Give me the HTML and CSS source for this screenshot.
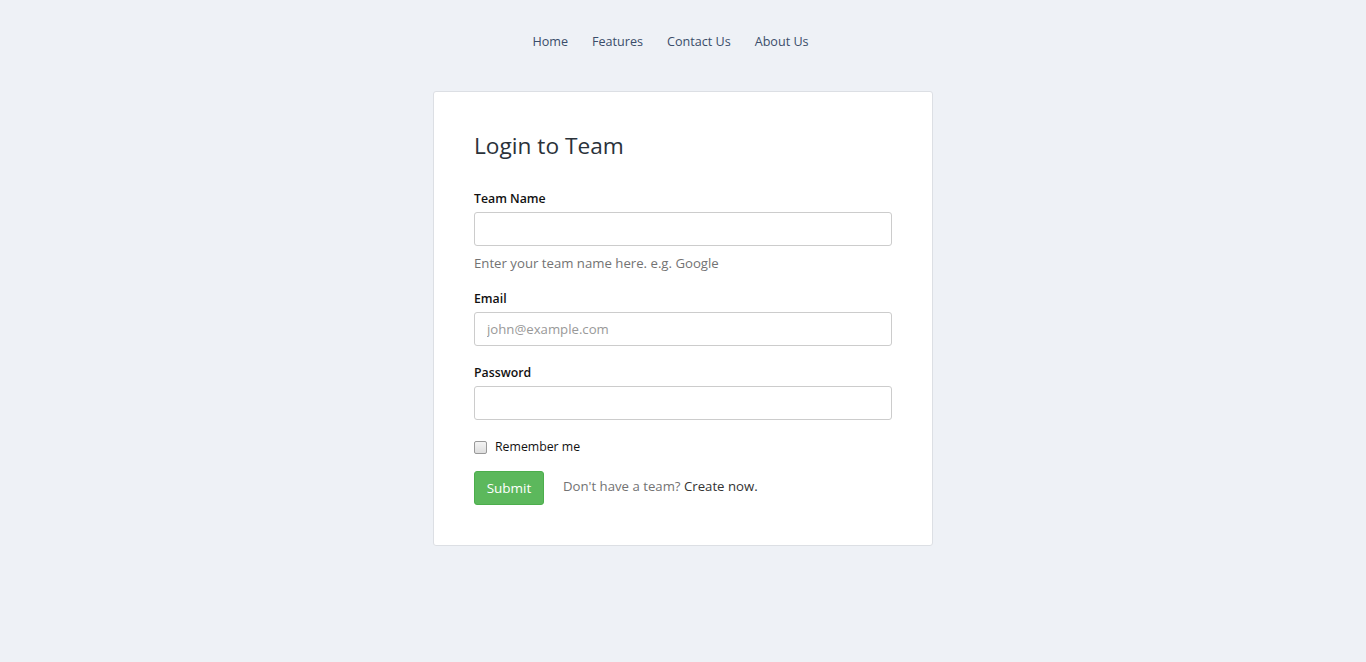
FILE: index.html
```html
<!DOCTYPE html>
<html>
<head>
<meta charset="utf-8">
<link rel="stylesheet" href="styles.css">
</head>
<body>
<nav class="nav">
  <a href="#">Home</a>
  <a href="#">Features</a>
  <a href="#">Contact Us</a>
  <a href="#">About Us</a>
</nav>
<main class="card">
  <h1 class="title">Login to Team</h1>
  <div class="group">
    <label class="label">Team Name</label>
    <input class="input" type="text">
    <p class="help">Enter your team name here. e.g. Google</p>
  </div>
  <div class="group">
    <label class="label">Email</label>
    <input class="input" type="text" placeholder="john@example.com">
  </div>
  <div class="group">
    <label class="label">Password</label>
    <input class="input" type="password">
  </div>
  <label class="check"><span class="box"></span>Remember me</label>
  <div class="actions">
    <button class="btn">Submit</button>
    <span class="alt">Don't have a team? <a href="#">Create now.</a></span>
  </div>
</main>
</body>
</html>
```
FILE: styles.css
```css
html, body { margin: 0; padding: 0; }
body {
  background: #eef1f6;
  font-family: "Open Sans", "Noto Sans", sans-serif;
  font-size: 13px;
  color: #333;
}
.nav {
  display: flex;
  justify-content: center;
  gap: 24px;
  padding: 33px 25px 0 0;
  height: 59px;
  box-sizing: border-box;
}
.nav a {
  color: #3a4d6a;
  text-decoration: none;
  font-size: 12.6px;
  line-height: 18px;
}
.card {
  width: 500px;
  box-sizing: border-box;
  margin: 32px auto 0;
  background: #fff;
  border: 1px solid #dcdfe4;
  border-radius: 3px;
  padding: 38px 40px 40px;
}
.title {
  margin: 0 0 28px;
  font-size: 22.7px;
  font-weight: 400;
  color: #2a323a;
  line-height: 32px;
}
.group { margin-bottom: 18px; }
.label {
  display: block;
  color: #111;
  font-size: 12.3px;
  font-weight: 600;
  line-height: 18px;
  margin-bottom: 4px;
}
.input {
  display: block;
  width: 100%;
  box-sizing: border-box;
  height: 34px;
  border: 1px solid #ccc;
  border-radius: 3px;
  padding: 6px 12px;
  font-family: inherit;
  font-size: 13.2px;
  color: #555;
}
.input::placeholder { color: #999; }
.help {
  margin: 8px 0 0;
  color: #737373;
  font-size: 13.2px;
  line-height: 18px;
}
.check {
  display: flex;
  align-items: center;
  gap: 8px;
  color: #111;
  font-size: 12.3px;
  line-height: 18px;
  margin: 18px 0 15px;
}
.box {
  width: 11px;
  height: 11px;
  border: 1px solid #999;
  border-radius: 2px;
  background: linear-gradient(#f4f4f4, #dedede);
}
.actions {
  display: flex;
  align-items: center;
  gap: 19px;
}
.btn {
  background: #5cb85c;
  border: 1px solid #4cae4c;
  color: #fff;
  border-radius: 3px;
  height: 34px;
  width: 70px;
  font-family: inherit;
  font-size: 13.5px;
  padding: 0;
}
.alt { color: #737373; margin-top: -4px; font-size: 13.2px; }
.alt a { color: #333; text-decoration: none; }
```
